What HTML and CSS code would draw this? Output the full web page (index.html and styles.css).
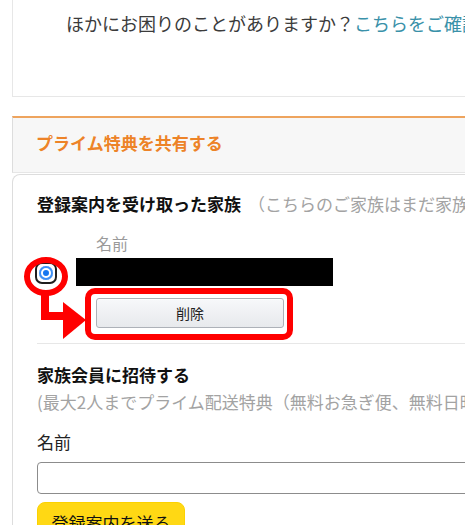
FILE: index.html
```html
<!DOCTYPE html>
<html lang="ja">
<head>
<meta charset="utf-8">
<title>プライム特典を共有する</title>
<link rel="stylesheet" href="styles.css">
</head>
<body>
<div class="page">
  <div class="help-box">
    <p class="help-text">ほかにお困りのことがありますか？<a class="help-link" href="#">こちらをご確認ください。</a></p>
  </div>

  <section class="share">
    <div class="share-title">
      <h2>プライム特典を共有する</h2>
    </div>
    <div class="share-body">
      <h3 class="sub-title">登録案内を受け取った家族<span class="hint">（こちらのご家族はまだ家族会員の登録を完了していません）</span></h3>

      <div class="member-grid">
        <div class="col-label">名前</div>
        <div class="radio-cell"><span class="radio"><span class="radio-dot"></span></span></div>
        <div class="name-mask"></div>
        <button class="btn-delete" type="button">削除</button>
      </div>

      <hr class="divider">

      <h3 class="sub-title">家族会員に招待する</h3>
      <p class="note">(最大2人までプライム配送特典（無料お急ぎ便、無料日時指定便）を共有できます)</p>
      <label class="field-label" for="name">名前</label>
      <input class="name-input" id="name" type="text">
      <button class="btn-send" type="button">登録案内を送る</button>
    </div>
  </section>

  <svg class="annotation" width="465" height="525" viewBox="0 0 465 525" aria-hidden="true">
    <ellipse cx="46" cy="276.5" rx="19" ry="16.5" fill="none" stroke="#ff0000" stroke-width="6"/>
    <rect x="41" y="292" width="8" height="28" fill="#ff0000"/>
    <rect x="41" y="312" width="24" height="8" fill="#ff0000"/>
    <polygon points="63,302 63,339 86,320" fill="#ff0000"/>
    <rect x="88" y="291" width="202" height="46" rx="7" ry="7" fill="none" stroke="#ff0000" stroke-width="6"/>
  </svg>
</div>
</body>
</html>
```

FILE: styles.css
```css
html, body {
  margin: 0;
  padding: 0;
  background: #fff;
  overflow: hidden;
}

body {
  font-family: "Noto Sans CJK JP", "Noto Sans", sans-serif;
  color: #333;
}

.page {
  position: relative;
  width: 720px;
  padding-left: 12px;
  height: 525px;
}

.help-box {
  box-sizing: border-box;
  height: 97px;
  border: 1px solid #e7e7e7;
  border-top: none;
  padding: 10px 0 0 53px;
}

.help-text {
  margin: 0;
  font-size: 18px;
  line-height: 27px;
  white-space: nowrap;
  color: #3b3b3b;
}

.help-link {
  color: #3a91a9;
  text-decoration: none;
}

.share {
  margin-top: 19px;
}

.share-title {
  background: #f7f7f7;
  border-top: 2px solid #eea45e;
  border-left: 1px solid #dddddd;
  border-bottom: 1px solid #e6e6e6;
  padding: 13px 0 17px 23px;
}

.share-title h2 {
  margin: 0;
  font-size: 17px;
  line-height: 24px;
  font-weight: 700;
  color: #ed8328;
  white-space: nowrap;
}

.share-body {
  margin-top: 1px;
  border: 1px solid #dddddd;
  border-bottom: none;
  border-radius: 8px 8px 0 0;
  padding: 17px 0 0 24px;
  height: 400px;
}

.sub-title {
  margin: 0;
  font-size: 17px;
  line-height: 24px;
  font-weight: 700;
  color: #111;
  white-space: nowrap;
}

.hint {
  margin-left: 7px;
  font-weight: 400;
  color: #a3a3a3;
}

.member-grid {
  display: grid;
  grid-template-columns: 39px auto;
  grid-template-areas:
    ". label"
    "radio mask"
    ". btn";
  justify-content: start;
  margin-top: 16px;
}

.col-label {
  grid-area: label;
  padding-left: 20px;
  font-size: 16px;
  line-height: 22px;
  color: #9a9a9a;
}

.radio-cell {
  grid-area: radio;
  align-self: start;
  margin: 8px 0 0 -2px;
  height: 22px;
}

.radio {
  box-sizing: border-box;
  display: flex;
  align-items: center;
  justify-content: center;
  width: 22px;
  height: 22px;
  border: 2px solid #1e1e1e;
  border-radius: 7px;
  background: #fff;
}

.radio-dot {
  width: 14px;
  height: 14px;
  border-radius: 50%;
  background: #1677f0;
  box-shadow: inset 0 0 0 2px #3d8ff5, inset 0 0 0 4px #ffffff;
}

.name-mask {
  grid-area: mask;
  margin-top: 4px;
  width: 257px;
  height: 28px;
  background: #000;
}

.btn-delete {
  grid-area: btn;
  justify-self: start;
  margin: 12px 0 0 20px;
  box-sizing: border-box;
  width: 188px;
  height: 30px;
  border: 1px solid #adb1b8;
  border-radius: 3px;
  background: linear-gradient(#f7f8fa, #e7e9ec);
  box-shadow: inset 0 1px 0 rgba(255, 255, 255, 0.6);
  font-family: inherit;
  font-size: 14px;
  line-height: 20px;
  color: #222;
  padding: 0;
}

.divider {
  margin: 15px 0 0 0;
  border: none;
  border-top: 1px solid #e7e7e7;
  height: 0;
}

.divider + .sub-title {
  margin-top: 19px;
}

.note {
  margin: 3px 0 0 0;
  font-size: 17px;
  line-height: 24px;
  color: #a3a3a3;
  white-space: nowrap;
}

.field-label {
  display: block;
  margin-top: 16px;
  font-size: 17px;
  line-height: 24px;
  color: #222;
}

.name-input {
  display: block;
  box-sizing: border-box;
  margin-top: 8px;
  width: 600px;
  height: 32px;
  border: 1px solid #8c8c8c;
  border-radius: 4px;
  background: #fff;
  padding: 0 8px;
}

.btn-send {
  display: block;
  box-sizing: border-box;
  margin-top: 8px;
  width: 148px;
  height: 36px;
  border: 1px solid #fcd200;
  border-radius: 8px;
  background: #ffd814;
  font-family: inherit;
  font-size: 17px;
  line-height: 24px;
  color: #0f1111;
  padding: 6px 0 0 0;
}

.annotation {
  position: absolute;
  left: 0;
  top: 0;
  pointer-events: none;
}
```
